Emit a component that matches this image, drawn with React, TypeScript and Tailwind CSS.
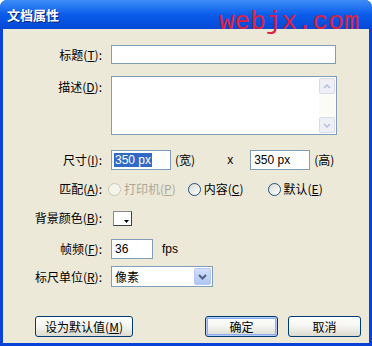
import React from 'react';

const font = { fontFamily: '"Noto Sans CJK SC", "Liberation Sans", sans-serif' };

function Label({ text, k }: { text: string; k: string }) {
  return (
    <div className="w-[100px] shrink-0 text-right pr-[1px] text-[12px] leading-none text-black">
      {text}(<span className="underline">{k}</span>):
    </div>
  );
}

function Radio({ disabled }: { disabled?: boolean }) {
  return (
    <span
      className={
        'inline-block w-[13px] h-[13px] rounded-full border ' +
        (disabled ? 'border-[#cac8bb] bg-[#f5f4ea]' : 'border-[#1c5180] bg-gradient-to-br from-[#dcdbd5] to-white')
      }
    />
  );
}

function Button({ children, primary, w }: { children: React.ReactNode; primary?: boolean; w: string }) {
  return (
    <div
      className={
        w +
        ' h-[21px] rounded-[3px] border border-[#003c74] bg-gradient-to-b from-white via-[#f4f4f0] to-[#dcdad0] flex items-center justify-center text-[12px] text-black ' +
        (primary ? 'shadow-[inset_0_0_0_1px_#b4cbf3,inset_0_0_0_2px_#8caef0]' : '')
      }
    >
      {children}
    </div>
  );
}

export default function App() {
  return (
    <div className="w-[372px] h-[346px] bg-[#0842d6] flex flex-col overflow-hidden relative rounded-t-[7px]" style={font}>
      <div className="h-[29px] shrink-0 bg-gradient-to-b from-[#3d8df5] via-[#0b5ceb] to-[#0548d4] flex items-center pl-[7px]">
        <span className="text-white font-bold text-[13px] [text-shadow:1px_1px_0_#0a1e7a]">文档属性</span>
      </div>
      <div className="flex-1 mx-[3px] mb-[3px] bg-[#ece9d8] flex flex-col text-[12px]">
        <div className="flex items-center mt-[16px] h-[19px]">
          <Label text="标题" k="T" />
          <div className="ml-[8px] w-[225px] h-[19px] bg-white border border-[#7f9db9]" />
        </div>
        <div className="flex items-start mt-[12px] h-[59px]">
          <div className="pt-[5px]">
            <Label text="描述" k="D" />
          </div>
          <div className="ml-[8px] w-[226px] h-[59px] bg-white border border-[#7f9db9] flex justify-end p-[1px]">
            <div className="w-[16px] h-full bg-[#fbfbf8] flex flex-col justify-between">
              <div className="h-[16px] rounded-[2px] bg-[#eef0f6] border border-[#d9dce8] flex items-center justify-center">
                <svg width="8" height="5" viewBox="0 0 8 5"><path d="M1 4 L4 1 L7 4" stroke="#b6bfd6" strokeWidth="1.5" fill="none" /></svg>
              </div>
              <div className="h-[16px] rounded-[2px] bg-[#eef0f6] border border-[#d9dce8] flex items-center justify-center">
                <svg width="8" height="5" viewBox="0 0 8 5"><path d="M1 1 L4 4 L7 1" stroke="#b6bfd6" strokeWidth="1.5" fill="none" /></svg>
              </div>
            </div>
          </div>
        </div>
        <div className="flex items-center mt-[15px] h-[20px]">
          <Label text="尺寸" k="I" />
          <div className="ml-[8px] w-[60px] h-[20px] bg-white border border-[#7f9db9] flex items-center pl-[2px]">
            <span className="bg-[#316ac5] text-white text-[12px] leading-[14px] px-[1px]" style={{ fontFamily: '"Liberation Sans", sans-serif' }}>350 px</span>
          </div>
          <span className="ml-[4px]">(宽)</span>
          <span className="ml-[32px] text-[12px]" style={{ fontFamily: '"Liberation Sans", sans-serif' }}>x</span>
          <div className="ml-[17px] w-[60px] h-[20px] bg-white border border-[#7f9db9] flex items-center pl-[3px]">
            <span style={{ fontFamily: '"Liberation Sans", sans-serif' }}>350 px</span>
          </div>
          <span className="ml-[4px]">(高)</span>
        </div>
        <div className="flex items-center mt-[11px] h-[16px]">
          <Label text="匹配" k="A" />
          <div className="ml-[5px] flex items-center gap-[3px] text-[#aca899]">
            <Radio disabled />
            <span>打印机(<span className="underline">P</span>)</span>
          </div>
          <div className="ml-[12px] flex items-center gap-[3px]">
            <Radio />
            <span>内容(<span className="underline">C</span>)</span>
          </div>
          <div className="ml-[24px] flex items-center gap-[3px]">
            <Radio />
            <span>默认(<span className="underline">E</span>)</span>
          </div>
        </div>
        <div className="flex items-center mt-[13px] h-[16px]">
          <Label text="背景颜色" k="B" />
          <div className="ml-[10px] w-[19px] h-[15px] bg-white border border-[#8a8a8a] border-r-[#404040] border-b-[#404040] flex items-end justify-end p-[2px]">
            <svg width="5" height="3" viewBox="0 0 5 3"><path d="M0 0 H5 L2.5 3 Z" fill="#000" /></svg>
          </div>
        </div>
        <div className="flex items-center mt-[13px] h-[20px]">
          <Label text="帧频" k="F" />
          <div className="ml-[8px] w-[42px] h-[20px] bg-white border border-[#7f9db9] flex items-center pl-[3px]">
            <span style={{ fontFamily: '"Liberation Sans", sans-serif' }}>36</span>
          </div>
          <span className="ml-[9px]" style={{ fontFamily: '"Liberation Sans", sans-serif' }}>fps</span>
        </div>
        <div className="flex items-center mt-[7px] h-[21px]">
          <Label text="标尺单位" k="R" />
          <div className="ml-[8px] w-[102px] h-[21px] bg-white border border-[#7f9db9] flex items-center justify-between pl-[3px] pr-[1px]">
            <span>像素</span>
            <div className="w-[17px] h-[17px] rounded-[2px] bg-gradient-to-b from-[#d2defa] to-[#b1c7f2] border border-[#b6c9f5] flex items-center justify-center">
              <svg width="9" height="6" viewBox="0 0 9 6"><path d="M1 1 L4.5 4.5 L8 1" stroke="#4d6185" strokeWidth="2" fill="none" /></svg>
            </div>
          </div>
        </div>
        <div className="flex items-center mt-[29px] pl-[32px]">
          <Button w="w-[98px]">设为默认值(<span className="underline">M</span>)</Button>
          <div className="ml-[72px]">
            <Button w="w-[73px]" primary>确定</Button>
          </div>
          <div className="ml-[10px]">
            <Button w="w-[73px]">取消</Button>
          </div>
        </div>
      </div>
      <div
        className="absolute left-[219px] top-[9px] text-[26px] leading-none text-[#e0203c] pointer-events-none"
        style={{ fontFamily: '"Liberation Mono", monospace' }}
      >
        webjx.com
      </div>
    </div>
  );
}
